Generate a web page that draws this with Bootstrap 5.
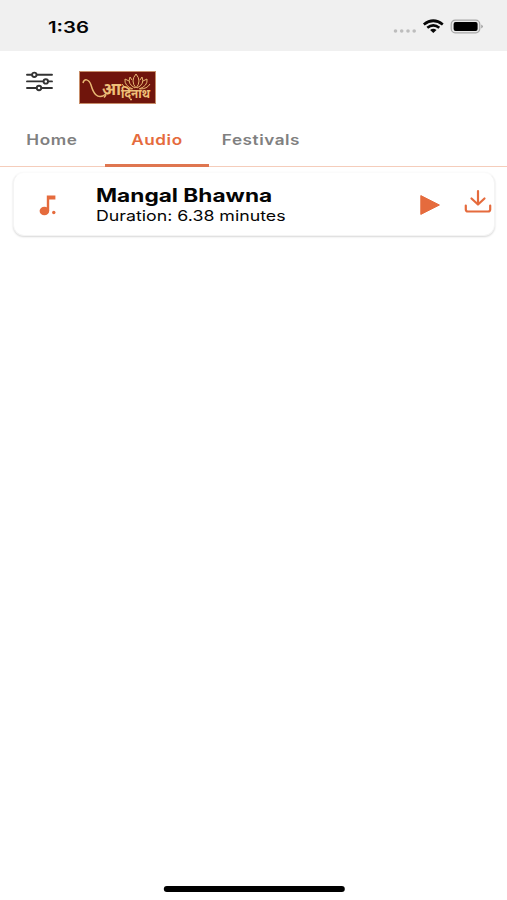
<!DOCTYPE html>
<html lang="en">
<head>
<meta charset="utf-8">
<meta name="viewport" content="width=device-width, initial-scale=1">
<title>Audio</title>
<link href="https://cdn.jsdelivr.net/npm/bootstrap@5.3.0/dist/css/bootstrap.min.css" rel="stylesheet">
<style>
:root { --accent: #e56b3d; }
body { font-family: Inter, "Liberation Sans", sans-serif; color: #050505; }
svg { display: block; flex: none; }
.status { height: 51px; background: #f0f0f0; padding: 3px 23px 0 47.5px; }
.wide { display: inline-block; transform: scaleX(1.225); transform-origin: 0 50%; white-space: nowrap; }
.clock { font-size: 16px; font-weight: 600; line-height: 20px; transform: scaleX(1.27); }
.brandbar { height: 63px; padding: 20px 0 0 26px; }
.tabs { height: 53px; border-bottom: 1.5px solid #f5cdbb; }
.tabs .nav-link { width: 104px; height: 53px; padding: 17px 0 0; font-size: 14px; line-height: 18px; font-weight: 600; letter-spacing: .45px; color: #808080; border-radius: 0; border-bottom: 3px solid transparent; }
.tabs .nav-link:first-child { width: 104.5px; }
.tabs .nav-link.active { color: var(--accent); border-bottom-color: #df7650; }
.tabs .wide { transform-origin: 50% 50%; }
.track { margin: 5px 12px 0 13px; height: 64px; border: 1px solid #f4f4f4; border-top-color: #fbfbfb; border-radius: 11px; box-shadow: 0 1px 2px rgba(0,0,0,.16); padding: 2px 2px 0 25px; }
.track-text { padding: 0 0 0 38px; }
.title { font-size: 18.5px; font-weight: 700; line-height: 21px; }
.duration { font-size: 14.5px; line-height: 19px; }
.home-bar { width: 181px; height: 6px; background: #000; border-radius: 3px; margin: 0 auto 8px; transform: translateX(.8px); }
</style>
<script src="https://cdn.jsdelivr.net/npm/bootstrap@5.3.0/dist/js/bootstrap.bundle.min.js"></script>
</head>
<body class="bg-white">
<div class="d-flex flex-column vh-100 overflow-hidden">
  <header class="status d-flex align-items-center justify-content-between">
    <span class="wide clock">1:36</span>
    <svg width="92" height="20" viewBox="0 0 92 20" style="margin-top:2px">
      <g fill="#bdbdbd"><circle cx="3.5" cy="13" r="1.8"/><circle cx="9.7" cy="13" r="1.8"/><circle cx="16" cy="13" r="1.8"/><circle cx="22.2" cy="13" r="1.8"/></g>
      <g fill="none" stroke="#080808" stroke-width="2.7"><path d="M31.8 6.5Q41.3-1 50.8 6.5"/><path d="M35.3 9.7Q41.3 5 47.3 9.7"/></g>
      <path d="M38.1 11.9Q41.3 9.7 44.5 11.9L41.3 14.9Z" fill="#080808"/>
      <rect x="59.2" y="2.2" width="28.6" height="12.6" rx="4" fill="#e9e9e9" stroke="#a8a8a8" stroke-width="1.2"/>
      <rect x="61.6" y="4.1" width="24" height="8.8" rx="2" fill="#000"/>
      <path d="M89.3 6.6Q92.3 8.4 89.3 10.4Z" fill="#999"/>
    </svg>
  </header>
  <div class="brandbar d-flex align-items-start">
    <svg width="27" height="22" viewBox="0 0 27 22">
      <g stroke="#333" stroke-width="1.9" stroke-linecap="round"><path d="M1 3.8H26M1 10.4H26M1 17H26"/></g>
      <g fill="#fff" stroke="#333" stroke-width="1.9"><circle cx="8.3" cy="3.8" r="2.2"/><circle cx="19.8" cy="10.4" r="2.2"/><circle cx="13" cy="17" r="2.2"/></g>
    </svg>
    <svg width="77" height="33" viewBox="0 0 77 33" style="margin-left:26px" role="img" aria-label="आदिनाथ">
      <rect x=".5" y=".5" width="76" height="32" fill="#70150c" stroke="#c78d69"/>
      <g fill="none" stroke="#e8b873" stroke-width="1">
        <path d="M4 12C5 7 10 8 12 14C14 21 18 30 27 23" stroke-width="1.5"/>
        <path d="M57 3Q51 10 57 17Q63 10 57 3ZM51 6Q48 13 56 17M63 6Q66 13 58 17M51 6L53 9M63 6L61 9M46 8Q45 15 54 18M68 8Q69 15 60 18M46 8L50 10M68 8L64 10M43 13Q46 18 53 18M71 13Q68 18 61 18"/>
        <path d="M27 24L25 26.5M51 28.5H53" stroke-width="1.5"/>
      </g>
      <text x="23" y="24" fill="#efc078" font-family="'Noto Sans Devanagari','Noto Sans',sans-serif" font-weight="700" font-size="17" textLength="48" lengthAdjust="spacingAndGlyphs">आ<tspan font-size="12" dy="3">दिनाथ</tspan></text>
    </svg>
  </div>
  <nav class="tabs nav flex-nowrap">
    <a class="nav-link text-center" href="#"><span class="wide">Home</span></a>
    <a class="nav-link text-center active" href="#"><span class="wide">Audio</span></a>
    <a class="nav-link text-center" href="#"><span class="wide">Festivals</span></a>
  </nav>
  <main class="flex-grow-1">
    <div class="track d-flex align-items-center bg-white">
      <svg width="19" height="22" viewBox="0 0 19 22"><g fill="#e56b3d"><ellipse cx="5.4" cy="17" rx="4.8" ry="4.3"/><path d="M7.8 1.6H16.4V5.6H10.2V17H7.8Z"/><circle cx="14.8" cy="18.5" r="1.7"/></g></svg>
      <div class="track-text flex-grow-1">
        <div class="title"><span class="wide">Mangal Bhawna</span></div>
        <div class="duration"><span class="wide">Duration: 6.38 minutes</span></div>
      </div>
      <svg width="20" height="22" viewBox="0 0 20 22"><path d="M.8 1.6L19.4 11L.8 20.4Z" fill="#e56b3d" stroke="#e56b3d" stroke-linejoin="round"/></svg>
      <svg width="28" height="24" viewBox="0 0 28 24" style="margin:0 0 6px 24px"><path d="M14 1.2V14M7.5 8.5L14 14.5L20.5 8.5M1.8 15.5V19.5Q1.8 21.5 4 21.5H24Q26.2 21.5 26.2 19.5V15.5" fill="none" stroke="#e56b3d" stroke-width="2.2" stroke-linecap="round" stroke-linejoin="round"/></svg>
    </div>
  </main>
  <div class="home-bar flex-shrink-0"></div>
</div>
</body>
</html>
